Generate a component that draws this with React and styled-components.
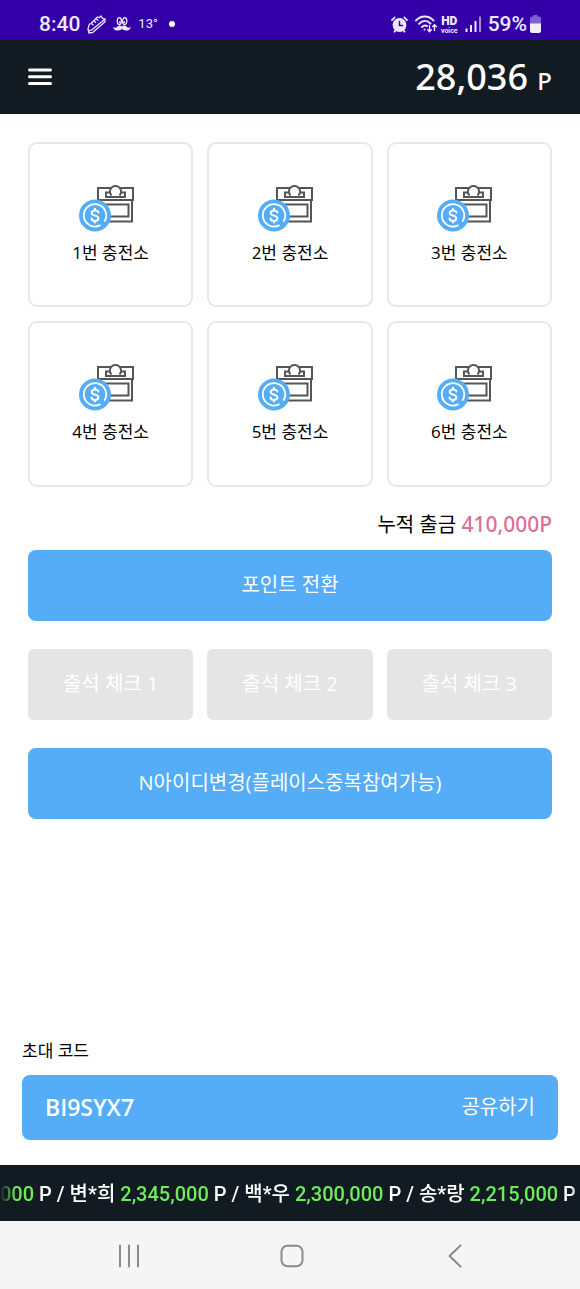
import styled, { createGlobalStyle } from "styled-components"

const estacoes = ["1번 충전소", "2번 충전소", "3번 충전소", "4번 충전소", "5번 충전소", "6번 충전소"]
const checks = ["출석 체크 1", "출석 체크 2", "출석 체크 3"]
const ranking = [
    { nome: "변*희", valor: "2,345,000" },
    { nome: "백*우", valor: "2,300,000" },
    { nome: "송*랑", valor: "2,215,000" },
]

export default function App() {
    return (
        <>
            <GlobalStyle />
            <Tela>
                <BarraStatus />
                <Topo>
                    <BotaoMenu type="button" aria-label="메뉴">
                        <svg width="24" height="18" viewBox="0 0 24 18" stroke="#fff" strokeWidth="3" strokeLinecap="round">
                            <path d="M1.5 2h21M1.5 8.8h21M1.5 15.6h21" />
                        </svg>
                    </BotaoMenu>
                    <Saldo>28,036 <small>P</small></Saldo>
                </Topo>
                <Conteudo>
                    <Grade>
                        {estacoes.map((nome) => (
                            <Cartao type="button" key={nome}>
                                <IconeLoja />
                                {nome}
                            </Cartao>
                        ))}
                    </Grade>
                    <Acumulado>누적 출금 <strong>410,000P</strong></Acumulado>
                    <Botao type="button">포인트 전환</Botao>
                    <Checks>
                        {checks.map((nome) => (
                            <Botao type="button" key={nome} disabled>{nome}</Botao>
                        ))}
                    </Checks>
                    <Botao type="button">N아이디변경(플레이스중복참여가능)</Botao>
                </Conteudo>
                <Convite>
                    <h2>초대 코드</h2>
                    <CaixaCodigo>
                        <Codigo>BI9SYX7</Codigo>
                        <Compartilhar type="button">공유하기</Compartilhar>
                    </CaixaCodigo>
                </Convite>
                <Letreiro>
                    <p>
                        <Valor>000</Valor> P /{" "}
                        {ranking.map((item) => (
                            <span key={item.nome}>
                                {item.nome} <Valor>{item.valor}</Valor> P /{" "}
                            </span>
                        ))}
                    </p>
                </Letreiro>
                <Navegacao>
                    <BotaoNav type="button" aria-label="최근 앱">
                        <svg width="24" height="24" viewBox="0 0 24 24">
                            <path d="M3 1.5v21M12 1.5v21M21 1.5v21" />
                        </svg>
                    </BotaoNav>
                    <BotaoNav type="button" aria-label="홈">
                        <svg width="24" height="24" viewBox="0 0 24 24">
                            <rect x="1.5" y="1.8" width="21" height="20.4" rx="6" />
                        </svg>
                    </BotaoNav>
                    <BotaoNav type="button" aria-label="뒤로">
                        <svg width="24" height="24" viewBox="0 0 24 24">
                            <path d="M17.5 1.5 6.5 12l11 10.5" />
                        </svg>
                    </BotaoNav>
                </Navegacao>
            </Tela>
        </>
    )
}

function BarraStatus() {
    return (
        <Status>
            <Grupo>
                <Hora>8:40</Hora>
                <svg width="19" height="19" viewBox="0 0 19 19" fill="none" stroke="#eee8ff" strokeWidth="1.3" strokeLinejoin="round">
                    <path d="M1 14 2.3 9.3 4 8.500 10.500 2l1.800.6L14 1l1.500 2.300 2.500.7v2.800L6 17.300 2 18z" />
                    <path d="M1.300 15.800 5 14.800 17.800 4.200M4.500 8.500l2 1.800M7 6l2 1.800M9.200 3.800l2 1.800" />
                </svg>
                <svg width="18" height="15" viewBox="0 0 18 15" fill="#eee8ff">
                    <g fill="none" stroke="#eee8ff" strokeWidth="1.300">
                        <ellipse cx="6.300" cy="4.200" rx="2.100" ry="3.500" />
                        <ellipse cx="11.700" cy="4.200" rx="2.100" ry="3.500" />
                    </g>
                    <circle cx="6.800" cy="5.300" r="1" />
                    <circle cx="11.200" cy="5.300" r="1" />
                    <path d="M9 9.500C7.500 7.800 5 8.500 4 10c-1 1.200-2.500 1-3.800-.2C.5 13 3 13.800 5 13.500c2 0 3.200-.8 4-1.700.8.900 2 1.700 4 1.700 2 .3 4.500-.5 4.800-3.700-1.300 1.200-2.800 1.400-3.800.2-1-1.500-3.500-2.200-5-.5z" />
                </svg>
                <Temperatura>13°</Temperatura>
                <Ponto />
            </Grupo>
            <Grupo>
                <svg width="17" height="17" viewBox="0 0 17 17" fill="none" stroke="#eee8ff" strokeLinecap="round">
                    <circle cx="8.500" cy="9" r="6.900" fill="#eee8ff" stroke="none" />
                    <path d="M1 4.200 3.600 1.500M16 4.200 13.400 1.500M3.500 15.700 5 14M13.500 15.700 12 14" strokeWidth="1.800" />
                    <path d="M8.500 5.500V9.500h3" stroke="#3300a8" strokeWidth="1.500" />
                </svg>
                <IconeWifi width="22" height="18" viewBox="0 0 22 18" fill="none" stroke="#eee8ff" strokeWidth="1.900" strokeLinecap="round">
                    <path d="M1 5.500C6 .2 13.500.2 18.500 5.500M4 8.800c3.500-3.600 8-3.600 11.500-.3M7 12c1.500-1.600 3.500-1.900 5-.9" />
                    <circle cx="9.500" cy="14.500" r="1" fill="#eee8ff" stroke="none" />
                    <path d="M14.500 10.500v6M12.700 14.800l1.800 1.900 1.800-1.900M19.500 15.500v-5.500M17.700 11.600l1.800-1.900 1.800 1.900" strokeWidth="1.400" />
                </IconeWifi>
                <Voz><b>HD</b><span>voice</span></Voz>
                <svg width="16" height="16" viewBox="0 0 16 16" stroke="#eee8ff" strokeWidth="2">
                    <path d="M1.500 12.500V16M6 9v7M10.500 5v11" />
                    <path d="M15 .5V16" opacity=".6" />
                </svg>
                <Bateria>
                    59%
                    <svg width="11" height="18" viewBox="0 0 11 18">
                        <path d="M3.500 0h4v1.500H9A2 2 0 0 1 11 3.500V9H0V3.500a2 2 0 0 1 2-2h1.500z" fill="#7d5fd0" />
                        <path d="M0 8.500h11V16a2 2 0 0 1-2 2H2a2 2 0 0 1-2-2z" fill="#f3eeff" />
                    </svg>
                </Bateria>
            </Grupo>
        </Status>
    )
}

function IconeLoja() {
    return (
        <svg width="64" height="48" viewBox="0 0 64 48" aria-hidden="true">
            <g fill="none" stroke="#555" strokeWidth="2">
                <path d="M19 3H54V15H19zM20 15V36.500H53V15M24 19.500H49.500V31.500H24z" />
                <path d="M27 7.500H46V12H27z" />
                <path d="M31.200 11.500V6.500a5.300 5.300 0 0 1 10.600 0v5" fill="#fff" stroke="none" />
                <path d="M32.500 10.500a5.600 5.600 0 1 1 8 0M30.500 12h12" />
            </g>
            <circle cx="16" cy="30.500" r="16" fill="#55acf7" />
            <path d="M21 40.400A11.200 11.200 0 1 1 25.700 36" fill="none" stroke="#fff" strokeWidth="1.800" strokeLinecap="round" />
            <path d="M19.400 27.600c-.4-1.400-1.700-2.100-3.400-2.100-1.900 0-3.300.9-3.300 2.500 0 3.600 6.700 1.600 6.700 5.300 0 1.700-1.400 2.600-3.400 2.600-1.800 0-3.200-.9-3.500-2.400M16 23.800v1.700M16 35.900v1.700" fill="none" stroke="#fff" strokeWidth="2" strokeLinecap="round" />
        </svg>
    )
}

const GlobalStyle = createGlobalStyle`
    * {
        box-sizing: border-box;
    }
    body {
        margin: 0;
        background-color: #fff;
        color: #000;
        font-family: "Open Sans", "Noto Sans CJK KR", sans-serif;
    }
    button {
        font-family: inherit;
        border: none;
        padding: 0;
        cursor: pointer;
    }
    svg {
        display: block;
        flex-shrink: 0;
    }
`
const Tela = styled.div`
    display: flex;
    flex-direction: column;
    min-height: 100vh;
`
const Status = styled.div`
    display: flex;
    justify-content: space-between;
    align-items: center;
    height: 40px;
    padding: 8px 39px 0;
    background-color: #3300a8;
    color: #eee8ff;
    font-family: Roboto, sans-serif;
`
const Grupo = styled.div`
    display: flex;
    align-items: center;
    gap: 7px;
`
const Hora = styled.span`
    font-size: 21px;
    font-weight: 500;
    line-height: 24px;
`
const Temperatura = styled.span`
    font-size: 13px;
    line-height: 24px;
`
const Ponto = styled.span`
    width: 6px;
    height: 6px;
    margin-left: 4px;
    border-radius: 50%;
    background-color: #fff;
`
const IconeWifi = styled.svg`
    margin-right: -3px;
`
const Voz = styled.span`
    display: flex;
    flex-direction: column;
    align-items: center;
    padding-top: 2px;
    font-size: 7px;
    font-weight: 700;
    line-height: 8px;
    b {
        font-size: 12px;
        line-height: 12px;
    }
`
const Bateria = styled.span`
    display: flex;
    align-items: center;
    gap: 3px;
    font-size: 21px;
    font-weight: 500;
    line-height: 24px;
`
const Topo = styled.header`
    display: flex;
    justify-content: space-between;
    align-items: center;
    height: 74px;
    padding: 0 28px;
    background-color: #111b21;
    color: #fff;
`
const BotaoMenu = styled.button`
    background: none;
`
const Saldo = styled.div`
    padding-top: 3px;
    font-family: "Noto Sans", sans-serif;
    font-size: 36px;
    font-weight: 500;
    line-height: 48px;
    small {
        font-size: 24px;
    }
`
const Conteudo = styled.main`
    display: flex;
    flex-direction: column;
    padding: 28px;
`
const Grade = styled.div`
    display: grid;
    grid-template-columns: repeat(3, 1fr);
    gap: 14px;
`
const Cartao = styled.button`
    display: flex;
    flex-direction: column;
    align-items: center;
    justify-content: center;
    gap: 8px;
    aspect-ratio: 1;
    border: 2px solid #e8e8e8;
    border-radius: 9px;
    background-color: #fff;
    color: #000;
    font-size: 17px;
    line-height: 24px;
`
const Acumulado = styled.p`
    margin: 23px 0 11px;
    text-align: right;
    font-size: 20px;
    line-height: 28px;
    strong {
        color: #db7093;
        font-family: "Noto Sans", sans-serif;
        font-size: 21px;
        font-weight: 500;
    }
`
const Botao = styled.button`
    height: 71px;
    border-radius: 8px;
    background-color: #55acf7;
    color: #fff;
    font-size: 20px;
    line-height: 28px;
    &:disabled {
        border-radius: 6px;
        background-color: #e5e5e5;
        cursor: default;
    }
`
const Checks = styled.div`
    display: grid;
    grid-template-columns: repeat(3, 1fr);
    gap: 14px;
    margin: 28px 0;
`
const Convite = styled.section`
    margin-top: auto;
    padding: 0 22px 25px;
    h2 {
        margin: 0 0 12px;
        font-size: 17px;
        font-weight: 400;
        line-height: 24px;
    }
`
const CaixaCodigo = styled.div`
    display: flex;
    justify-content: space-between;
    align-items: center;
    height: 65px;
    padding: 0 23px 2px;
    border-radius: 8px;
    background-color: #55acf7;
    color: #fff;
`
const Codigo = styled.span`
    font-size: 23px;
    font-weight: 600;
    line-height: 28px;
`
const Compartilhar = styled.button`
    background: none;
    color: #fff;
    font-size: 20px;
    line-height: 28px;
`
const Letreiro = styled.div`
    display: flex;
    align-items: center;
    height: 56px;
    padding-top: 2px;
    overflow: hidden;
    background-color: #111b21;
    color: #fff;
    font-family: Roboto, "Noto Sans CJK KR", sans-serif;
    font-size: 20px;
    font-weight: 500;
    line-height: 28px;
    white-space: nowrap;
    p {
        width: 100%;
        margin: 0;
        overflow: hidden;
        mask-image: linear-gradient(to right, transparent, #000 16px, #000 calc(100% - 8px), transparent);
    }
`
const Valor = styled.span`
    color: #6ced5c;
`
const Navegacao = styled.nav`
    display: flex;
    justify-content: space-around;
    align-items: center;
    height: 68px;
    padding: 2px 44px 0 48px;
    background-color: #f5f5f5;
`
const BotaoNav = styled.button`
    background: none;
    svg {
        fill: none;
        stroke: #8c8c8c;
        stroke-width: 2;
        stroke-linecap: round;
        stroke-linejoin: round;
    }
`
